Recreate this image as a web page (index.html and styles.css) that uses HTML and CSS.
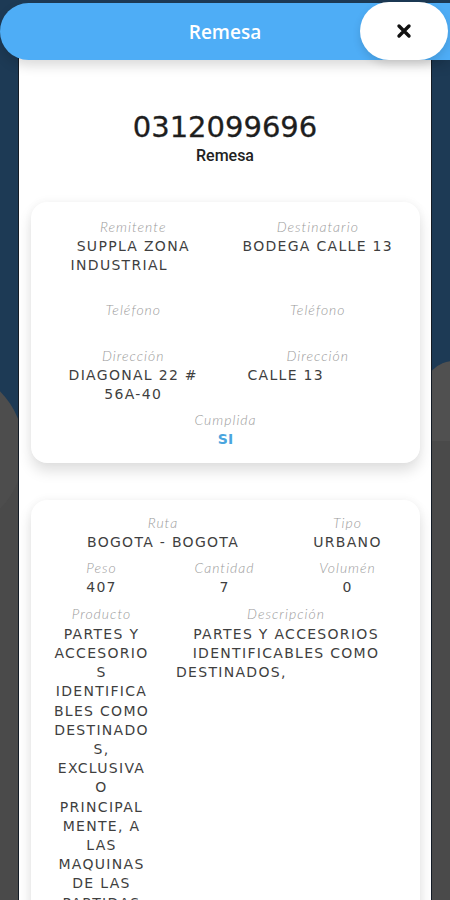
FILE: index.html
```html
<!DOCTYPE html>
<html>

<head>
    <meta charset="utf-8">
    <meta name="viewport" content="width=device-width">
    <title>Remesa</title>
    <link rel="stylesheet" href="styles.css">
</head>

<body>
    <div class="blob blob-left"></div>
    <div class="blob blob-right"></div>

    <div class="screen">
        <div class="topbar">
            <span class="topbar-title">Remesa</span>
            <a href="#" class="close">
                <svg width="16" height="16" viewBox="0 0 16 16">
                    <path d="M3 3 L13 13 M13 3 L3 13" stroke="#111" stroke-width="3.4" stroke-linecap="round" fill="none" />
                </svg>
            </a>
        </div>

        <div class="sheet">
            <div class="number">0312099696</div>
            <div class="subtitle">Remesa</div>

            <div class="card card-parties">
                <div class="row">
                    <div class="field">
                        <div class="label">Remitente</div>
                        <div class="val">SUPPLA ZONA<br><span class="nudge-a">INDUSTRIAL</span></div>
                    </div>
                    <div class="field">
                        <div class="label">Destinatario</div>
                        <div class="val">BODEGA CALLE 13</div>
                    </div>
                </div>
                <div class="row row-empty">
                    <div class="field">
                        <div class="label">Teléfono</div>
                        <div class="val"></div>
                    </div>
                    <div class="field">
                        <div class="label">Teléfono</div>
                        <div class="val"></div>
                    </div>
                </div>
                <div class="row row-tight">
                    <div class="field">
                        <div class="label">Dirección</div>
                        <div class="val">DIAGONAL 22 #<br>56A-40</div>
                    </div>
                    <div class="field">
                        <div class="label">Dirección</div>
                        <div class="val"><span class="nudge-b">CALLE 13</span></div>
                    </div>
                </div>
                <div class="field">
                    <div class="label">Cumplida</div>
                    <div class="val val-ok">SI</div>
                </div>
            </div>

            <div class="card card-load">
                <div class="field span-2">
                    <div class="label">Ruta</div>
                    <div class="val">BOGOTA - BOGOTA</div>
                </div>
                <div class="field">
                    <div class="label">Tipo</div>
                    <div class="val">URBANO</div>
                </div>
                <div class="field">
                    <div class="label">Peso</div>
                    <div class="val">407</div>
                </div>
                <div class="field">
                    <div class="label">Cantidad</div>
                    <div class="val">7</div>
                </div>
                <div class="field">
                    <div class="label">Volumén</div>
                    <div class="val">0</div>
                </div>
                <div class="field">
                    <div class="label">Producto</div>
                    <div class="val val-long">PARTES Y<br>ACCESORIO<br>S<br>IDENTIFICA<br>BLES COMO<br>DESTINADO<br>S,<br>EXCLUSIVA<br>O<br>PRINCIPAL<br>MENTE, A<br>LAS<br>MAQUINAS<br>DE LAS<br>PARTIDAS<br>84.29 A<br>84.80</div>
                </div>
                <div class="field span-2">
                    <div class="label">Descripción</div>
                    <div class="val val-long">PARTES Y ACCESORIOS<br>IDENTIFICABLES COMO<span class="tail">DESTINADOS,</span></div>
                </div>
            </div>
        </div>
    </div>
</body>

</html>
```

FILE: styles.css
```css
html,
body {
    margin: 0;
    height: 900px;
    overflow: hidden;
}

body {
    position: relative;
    background: linear-gradient(#1d3a55 0, #1d3a55 420px, #4a4a4a 420px);
}

/* background shapes behind the sheet */
.blob {
    position: absolute;
    background: #4d4d4d;
}

.blob-left {
    left: -144px;
    top: 366px;
    width: 168px;
    height: 168px;
    border-radius: 50%;
}

.blob-right {
    left: 424px;
    top: 361px;
    width: 60px;
    height: 80px;
    border-radius: 30px 0 0 0;
    background: #505050;
}

.screen {
    position: relative;
    display: flex;
    flex-direction: column;
}

.topbar {
    position: relative;
    z-index: 2;
    margin-top: 3px;
    height: 57px;
    display: flex;
    align-items: center;
    justify-content: center;
    background: #4eadf6;
    border-radius: 29px 0 0 29px;
    box-shadow: 0 6px 12px rgba(0, 0, 0, .14);
}

.topbar-title {
    font-family: "Open Sans", sans-serif;
    font-size: 19px;
    font-weight: 600;
    color: #fff;
}

.close {
    position: absolute;
    right: 2px;
    top: -1px;
    width: 88px;
    height: 58px;
    display: flex;
    align-items: center;
    justify-content: center;
    background: #fff;
    border-radius: 30px;
    box-shadow: 0 4px 8px rgba(0, 0, 0, .12);
}

.sheet {
    margin: -10px 18px 0;
    padding-top: 60px;
    height: 900px;
    background: #fff;
    border-left: 1px solid #141c26;
    border-right: 1px solid #141c26;
}

.number {
    text-align: center;
    font-family: "DejaVu Sans", sans-serif;
    font-size: 29px;
    line-height: 34px;
    color: #1e1e1e;
    -webkit-text-stroke: 0.3px #1e1e1e;
}

.subtitle {
    margin-top: 2px;
    text-align: center;
    font-family: Roboto, sans-serif;
    font-size: 16px;
    font-weight: 500;
    line-height: 20px;
    color: #222;
}

.card {
    margin: 0 11px 0 12px;
    background: #fff;
    border-radius: 16px;
    box-shadow: 0 8px 14px rgba(0, 0, 0, .13), 0 -2px 8px rgba(0, 0, 0, .03);
}

.card-parties {
    margin-top: 36px;
    padding: 15px 10px 14px;
}

.card-load {
    margin-top: 37px;
    padding: 13px 11px 20px 9px;
    display: grid;
    grid-template-columns: 1fr 1fr 1fr;
    row-gap: 6px;
}

.row {
    display: grid;
    grid-template-columns: 1fr 1fr;
    margin-bottom: 24px;
}

.row-empty {
    margin-bottom: 26px;
}

.row-tight {
    margin-bottom: 5px;
}

.span-2 {
    grid-column: span 2;
}

.field {
    text-align: center;
}

.label {
    font-family: Lato, sans-serif;
    font-style: italic;
    font-weight: 300;
    font-size: 14px;
    line-height: 20px;
    letter-spacing: 1px;
    color: #9b9b9b;
}

.val {
    font-family: "DejaVu Sans", sans-serif;
    font-size: 14px;
    line-height: 19.4px;
    letter-spacing: 1.3px;
    color: #3f3f3f;
}

.val-long {
    margin-top: 1px;
    line-height: 19.2px;
}

.val-ok {
    font-weight: bold;
    letter-spacing: 0;
    color: #4aa5de;
}

.nudge-a {
    padding-right: 28px;
}

.nudge-b {
    padding-right: 64px;
}

.tail {
    display: block;
    text-align: left;
    padding-left: 13px;
}
```
